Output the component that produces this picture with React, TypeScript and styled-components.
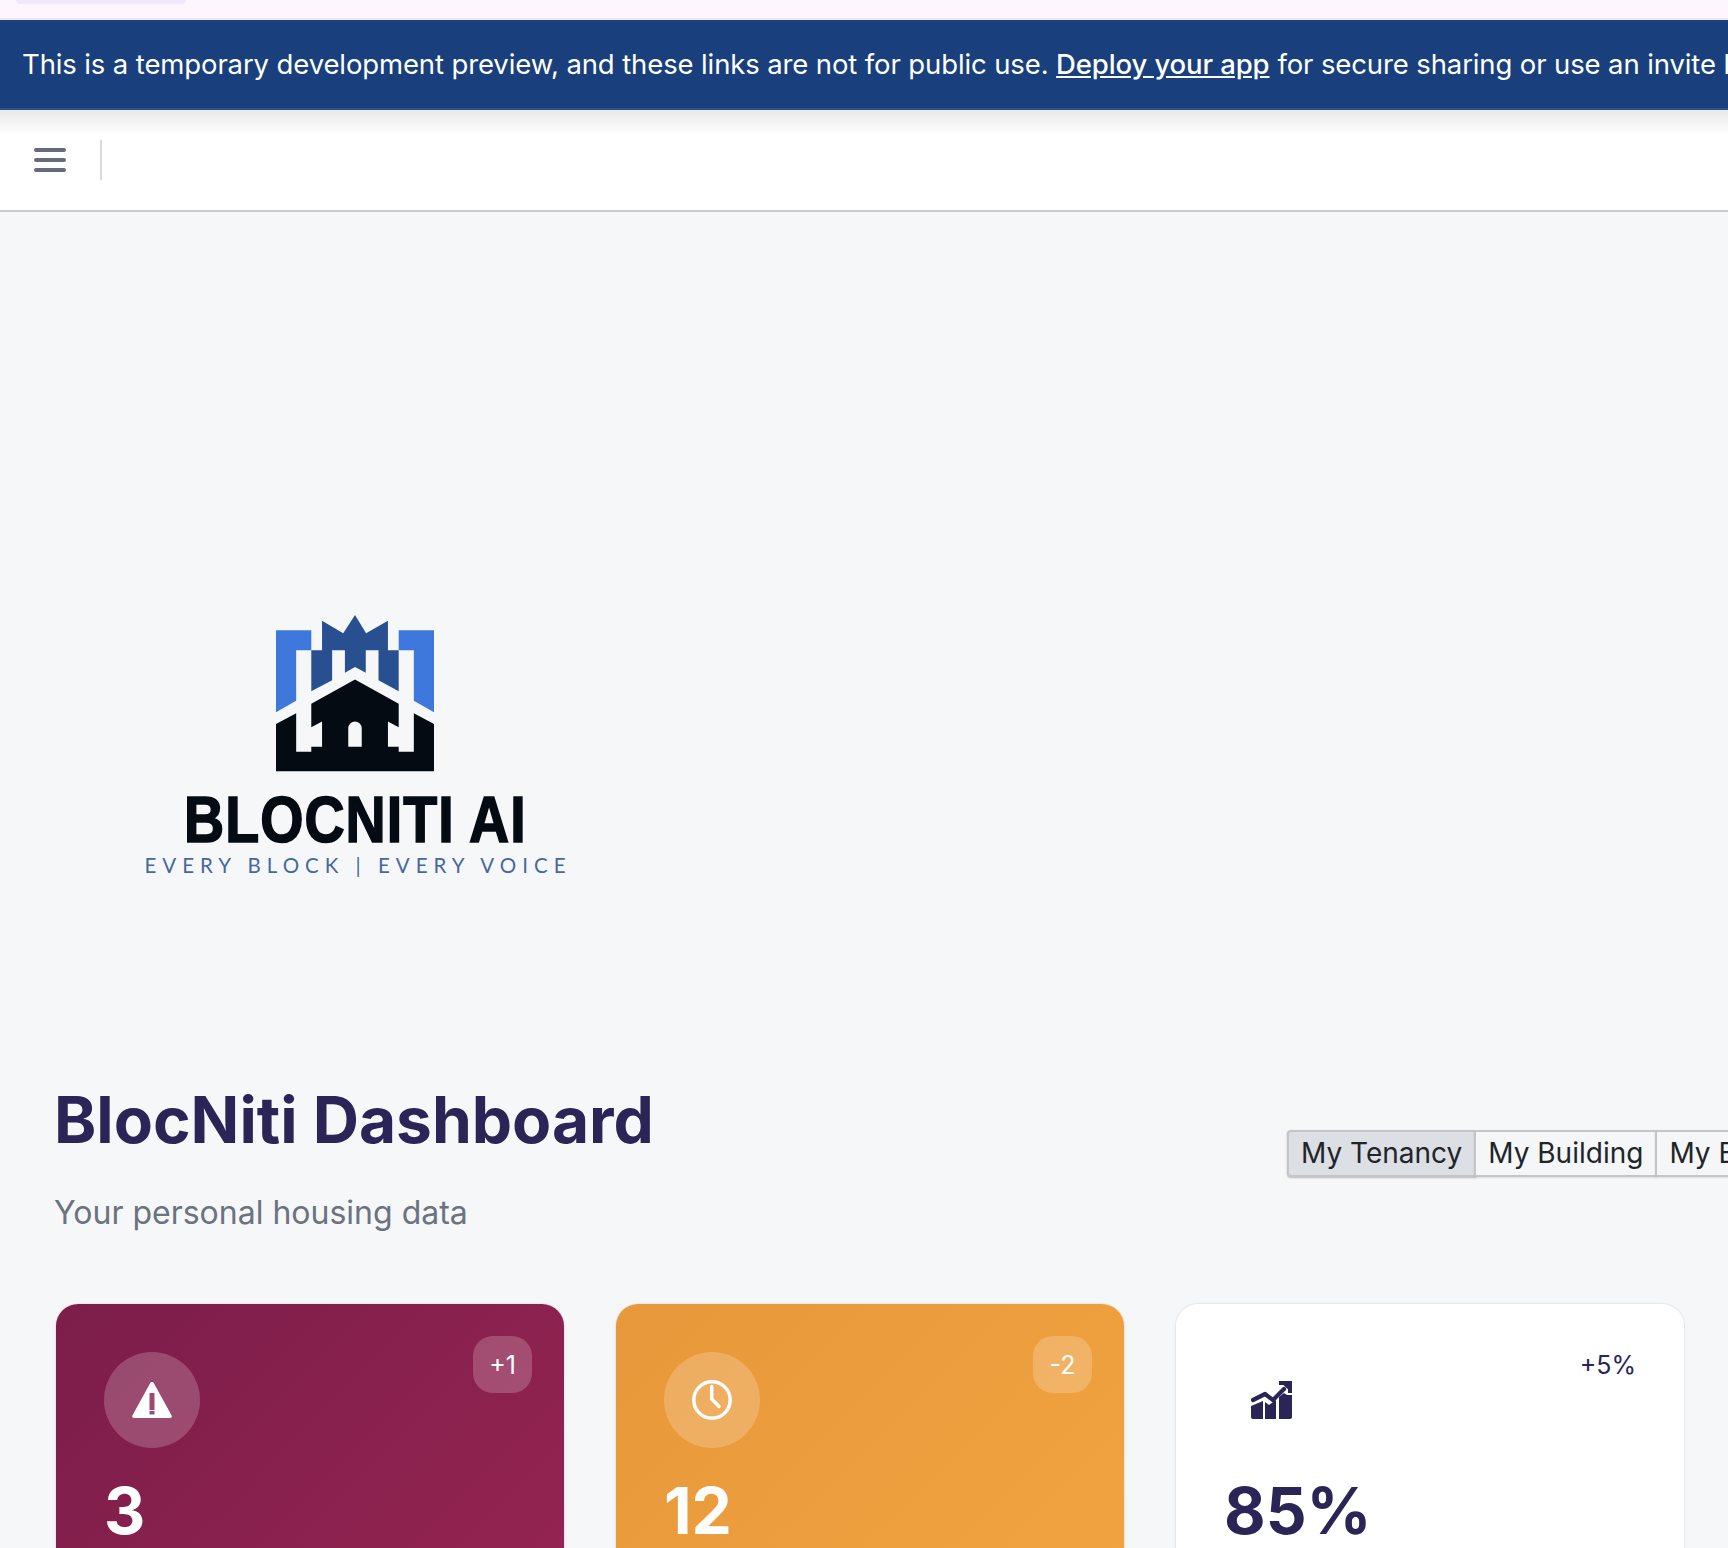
import React from "react";
import styled, { createGlobalStyle } from "styled-components";

const Global = createGlobalStyle`
  html, body { margin: 0; padding: 0; background: #f6f7f9; overflow: hidden; }
  body { font-family: Inter, "Liberation Sans", sans-serif; width: 1728px; height: 1548px; }
`;
const Page = styled.div`width: 1728px; height: 1548px; overflow: hidden; display: flex; flex-direction: column;`;
const TopStrip = styled.div`
  height: 18px; background: #fdf6ff; border-bottom: 2px solid #efe8f2; flex: none; padding-left: 16px;
`;
const TopPill = styled.div`width: 170px; height: 4px; background: #efe9fb; border-radius: 0 0 8px 8px;`;
const Banner = styled.div`
  height: 90px; flex: none; background: #19407c; border-bottom: 2px solid #2f5488; color: #fff; box-sizing: border-box;
  display: flex; align-items: center; padding-left: 22px; font-size: 27.5px; letter-spacing: -0.12px; white-space: nowrap; overflow: hidden;
  a { color: #fff; text-decoration: underline; font-weight: 500; margin: 0 8px 0 0; }
`;
const Header = styled.header`
  height: 102px; flex: none; box-sizing: border-box; background: linear-gradient(#e9e9e9 0, #ffffff 26px);
  border-bottom: 2px solid #c9cbce; display: flex; align-items: center; padding-left: 34px;
`;
const Divider = styled.div`width: 2px; height: 40px; background: #d6d8db; margin-left: 34px;`;
const Main = styled.main`flex: 1; min-height: 0; display: flex; flex-direction: column; padding: 0 44px 0 54px;`;
const LogoBlock = styled.div`
  width: 602px; margin-top: 403px; display: flex; flex-direction: column; align-items: center;
`;
const LogoWord = styled.div`
  font-family: "Liberation Sans", sans-serif; font-weight: 700; font-size: 64px; line-height: 50px; margin-top: 22px;
  color: #050b13; -webkit-text-stroke: 1.6px #050b13; letter-spacing: 1.2px; transform: scaleX(0.868); white-space: nowrap;
`;
const LogoTag = styled.div`
  font-family: Lato, sans-serif; font-size: 20.5px; line-height: 22px; letter-spacing: 6px; color: #47689f; margin-top: 9px; padding-left: 6px; white-space: nowrap;
`;
const TitleRow = styled.div`display: flex; align-items: flex-start; margin-top: 206px;`;
const Heading = styled.div`flex: 0 0 1235px;`;
const Title = styled.h1`
  margin: 0; font-size: 64px; line-height: 76px; font-weight: 700; color: #2a2457; white-space: nowrap;
`;
const Sub = styled.p`margin: 35px 0 0; font-size: 32px; line-height: 40px; color: #6b7280; white-space: nowrap;`;
const Tabs = styled.div`display: flex; flex: none; margin-top: 48px;`;
const Tab = styled.button<{ $active?: boolean }>`
  font-family: inherit; font-size: 28px; line-height: 41px; height: 47px; box-sizing: border-box; color: #212529; white-space: nowrap;
  padding: 0 12px; margin-left: -2px; border: 2px solid #c3c5c9;
  background: ${(p) => (p.$active ? "#dcdfe4" : "#f5f6f8")};
  border-radius: ${(p) => (p.$active ? "4px 0 0 4px" : "0")};
  box-shadow: 0 1px 2px rgba(0,0,0,${(p) => (p.$active ? 0.25 : 0.1)});
`;
const Cards = styled.section`
  display: grid; grid-template-columns: repeat(3, 508px); column-gap: 52px; margin-top: 71px; padding-left: 2px;
`;
const Card = styled.article<{ $tone: "red" | "amber" | "plain" }>`
  height: 400px; box-sizing: border-box; border-radius: 22px; position: relative; padding: 48px 0 0 48px;
  background: ${(p) =>
    p.$tone === "red" ? "linear-gradient(135deg,#7c1d4a,#982552)" :
    p.$tone === "amber" ? "linear-gradient(135deg,#e7983a,#f3a542)" : "#fff"};
  color: ${(p) => (p.$tone === "plain" ? "#2a2457" : "#fff")};
  box-shadow: 0 0 0 1px #e6e8ec, 0 2px 6px rgba(0,0,0,.04);
`;
const IconCircle = styled.div<{ $plain?: boolean }>`
  width: 96px; height: 96px; border-radius: 50%; display: flex; align-items: center; justify-content: center;
  background: ${(p) => (p.$plain ? "transparent" : "rgba(255,255,255,.2)")};
`;
const Badge = styled.div<{ $plain?: boolean }>`
  position: absolute; top: 32px; right: ${(p) => (p.$plain ? "48px" : "32px")}; height: 57px; border-radius: 20px;
  width: ${(p) => (p.$plain ? "auto" : "59px")};
  display: flex; align-items: center; justify-content: center; font-size: 25px; white-space: nowrap;
  background: ${(p) => (p.$plain ? "transparent" : "rgba(255,255,255,.2)")};
`;
const Value = styled.div`font-size: 64px; line-height: 80px; font-weight: 700; margin-top: 23px;`;

const WarnIcon = () => (
  <svg width="40" height="36" viewBox="0 0 40 36" fill="#fff">
    <path fillRule="evenodd" d="M20 0 C21 0 21.6 .6 22 1.4 L39.6 33.5 C40.2 34.8 39.4 36 38 36 L2 36 C.6 36 -.2 34.8 .4 33.5 L18 1.4 C18.4 .6 19 0 20 0Z M17.5 11 V28 H22.5 V11Z M17.5 29 V32.5 H22.5 V29Z" />
  </svg>
);
const ClockIcon = () => (
  <svg width="40" height="40" viewBox="0 0 40 40" fill="none" stroke="#fff" strokeWidth="3.5" strokeLinecap="round" strokeLinejoin="round">
    <circle cx="20" cy="20" r="18.2" />
    <path d="M19.7 6.5 V19 L27 26.5" />
  </svg>
);
const ChartIcon = () => (
  <svg width="42" height="40" viewBox="0 0 42 40" fill="#2a2457">
    <path d="M0 26 L12 21 V39 H2 a2 2 0 0 1 -2 -2Z M14 22 L18 25 L25 20 V39 H14Z M28 17 L33 13 L36 15 H41 V37 a2 2 0 0 1 -2 2 H28Z" />
    <path d="M2 20 L14 14 L22 20 L33 9" fill="none" stroke="#2a2457" strokeWidth="4.2" strokeLinecap="round" strokeLinejoin="round" />
    <path d="M28 1 H40 a1 1 0 0 1 1 1 V13 L37 13 V5 H28Z" />
    <path d="M28 1 H41 V13Z" />
  </svg>
);
const MenuIcon = () => (
  <svg width="32" height="24" viewBox="0 0 32 24" fill="none" stroke="#646b7b" strokeWidth="4" strokeLinecap="round">
    <path d="M2 2 H30 M2 12 H30 M2 22 H30" />
  </svg>
);
const LogoMark = () => (
  <svg width="158" height="158" viewBox="50 28 470 470">
    <path fill="#3f78dc" d="M50 73H155V133H110V283L50 317Z M415 73H520V317L460 283V133H415Z" />
    <path fill="#284f90" d="M187 45L250 82L285 28L318 82L383 45V133H415V255L355 222V133H317V200L285 183L255 200V133H217V222L155 255V133H187Z" />
    <path fill="#050b13" fillRule="evenodd" d="M285 220L415 292V362L383 345V420H415V435H460V320L520 352V493H50V352L110 320V435H155V420H187V345L155 362V292Z M265 420H305V365A20 20 0 0 0 265 365Z" />
  </svg>
);

export default function App() {
  return (
    <Page>
      <Global />
      <TopStrip><TopPill /></TopStrip>
      <Banner>
        This is a temporary development preview, and these links are not for public use.&nbsp;
        <a>Deploy your app</a>
        for secure sharing or use an invite link
      </Banner>
      <Header><MenuIcon /><Divider /></Header>
      <Main>
        <LogoBlock>
          <LogoMark />
          <LogoWord>BLOCNITI AI</LogoWord>
          <LogoTag>EVERY BLOCK | EVERY VOICE</LogoTag>
        </LogoBlock>
        <TitleRow>
          <Heading>
            <Title>BlocNiti Dashboard</Title>
            <Sub>Your personal housing data</Sub>
          </Heading>
          <Tabs>
            <Tab $active>My Tenancy</Tab>
            <Tab>My Building</Tab>
            <Tab>My Block</Tab>
          </Tabs>
        </TitleRow>
        <Cards>
          <Card $tone="red">
            <IconCircle><WarnIcon /></IconCircle>
            <Badge>+1</Badge>
            <Value>3</Value>
          </Card>
          <Card $tone="amber">
            <IconCircle><ClockIcon /></IconCircle>
            <Badge>-2</Badge>
            <Value>12</Value>
          </Card>
          <Card $tone="plain">
            <IconCircle $plain><ChartIcon /></IconCircle>
            <Badge $plain>+5%</Badge>
            <Value>85%</Value>
          </Card>
        </Cards>
      </Main>
    </Page>
  );
}
